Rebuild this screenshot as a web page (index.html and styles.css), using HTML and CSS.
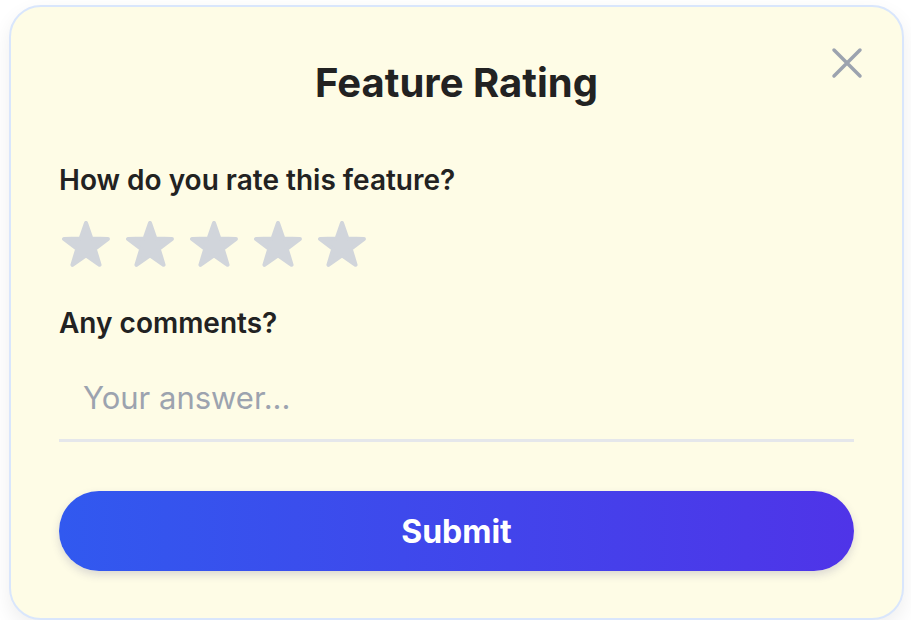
FILE: index.html
```html
<!DOCTYPE html>
<html lang="en">
<head>
<meta charset="utf-8">
<title>Feature Rating</title>
<link rel="stylesheet" href="styles.css">
</head>
<body>
<div class="page">
  <form class="card">
    <button type="button" class="close" aria-label="Close">
      <svg width="32" height="32" viewBox="0 0 32 32"><path d="M3 3L29 29M29 3L3 29" stroke="#9ca3af" stroke-width="3.5" stroke-linecap="round" fill="none"/></svg>
    </button>
    <h1 class="title">Feature Rating</h1>
    <div class="label">How do you rate this feature?</div>
    <div class="stars">
      <svg class="star" width="48" height="46" viewBox="0 0 48 46"><polygon points="24,2 29.43,17.62 45.97,17.96 32.79,27.96 37.58,43.79 24,34.34 10.42,43.79 15.21,27.96 2.03,17.96 18.57,17.62"/></svg>
      <svg class="star" width="48" height="46" viewBox="0 0 48 46"><polygon points="24,2 29.43,17.62 45.97,17.96 32.79,27.96 37.58,43.79 24,34.34 10.42,43.79 15.21,27.96 2.03,17.96 18.57,17.62"/></svg>
      <svg class="star" width="48" height="46" viewBox="0 0 48 46"><polygon points="24,2 29.43,17.62 45.97,17.96 32.79,27.96 37.58,43.79 24,34.34 10.42,43.79 15.21,27.96 2.03,17.96 18.57,17.62"/></svg>
      <svg class="star" width="48" height="46" viewBox="0 0 48 46"><polygon points="24,2 29.43,17.62 45.97,17.96 32.79,27.96 37.58,43.79 24,34.34 10.42,43.79 15.21,27.96 2.03,17.96 18.57,17.62"/></svg>
      <svg class="star" width="48" height="46" viewBox="0 0 48 46"><polygon points="24,2 29.43,17.62 45.97,17.96 32.79,27.96 37.58,43.79 24,34.34 10.42,43.79 15.21,27.96 2.03,17.96 18.57,17.62"/></svg>
    </div>
    <div class="label label-comments">Any comments?</div>
    <input class="answer" type="text" placeholder="Your answer...">
    <button type="button" class="submit">Submit</button>
  </form>
</div>
</body>
</html>
```

FILE: styles.css
```css
html, body {
  margin: 0;
  padding: 0;
  background: #ffffff;
}
body {
  font-family: Inter, "Noto Sans", sans-serif;
  color: #222222;
}
.page {
  padding: 5px 0 0 9px;
}
.card {
  position: relative;
  box-sizing: border-box;
  width: 895px;
  height: 615px;
  margin: 0;
  padding: 54px 48px 47px;
  background: #fefce6;
  border: 2px solid #d9e6fc;
  border-radius: 32px;
  box-shadow: 0 8px 20px rgba(0, 0, 0, 0.07);
  display: flex;
  flex-direction: column;
}
.close {
  position: absolute;
  top: 40px;
  right: 39px;
  width: 32px;
  height: 32px;
  padding: 0;
  margin: 0;
  border: 0;
  background: none;
  cursor: pointer;
}
.close svg { display: block; }
.title {
  margin: 0 0 59px;
  font-size: 40px;
  line-height: 44px;
  font-weight: 700;
  text-align: center;
  color: #222222;
}
.label {
  font-size: 28px;
  line-height: 32px;
  font-weight: 600;
  color: #222222;
}
.stars {
  display: flex;
  gap: 16px;
  margin: 25px 0 0 3px;
}
.star {
  display: block;
  fill: #d1d5db;
  stroke: #d1d5db;
  stroke-width: 4;
  stroke-linejoin: round;
}
.label-comments {
  margin-top: 40px;
}
.answer {
  box-sizing: content-box;
  display: block;
  margin: 17px 0 0;
  padding: 24px 24px 23px;
  height: 36px;
  font-family: Inter, "Noto Sans", sans-serif;
  font-size: 31px;
  line-height: 36px;
  color: #222222;
  background: transparent;
  border: 0;
  border-bottom: 3px solid #e5e7eb;
  outline: none;
}
.answer::placeholder {
  color: #9ca3af;
}
.submit {
  margin-top: 49px;
  height: 80px;
  border: 0;
  border-radius: 40px;
  background: linear-gradient(90deg, #3159ef 0%, #4f34e8 100%);
  box-shadow: 0 4px 8px rgba(60, 60, 120, 0.18);
  color: #ffffff;
  font-family: Inter, "Noto Sans", sans-serif;
  font-size: 32px;
  font-weight: 700;
  cursor: pointer;
}
```
